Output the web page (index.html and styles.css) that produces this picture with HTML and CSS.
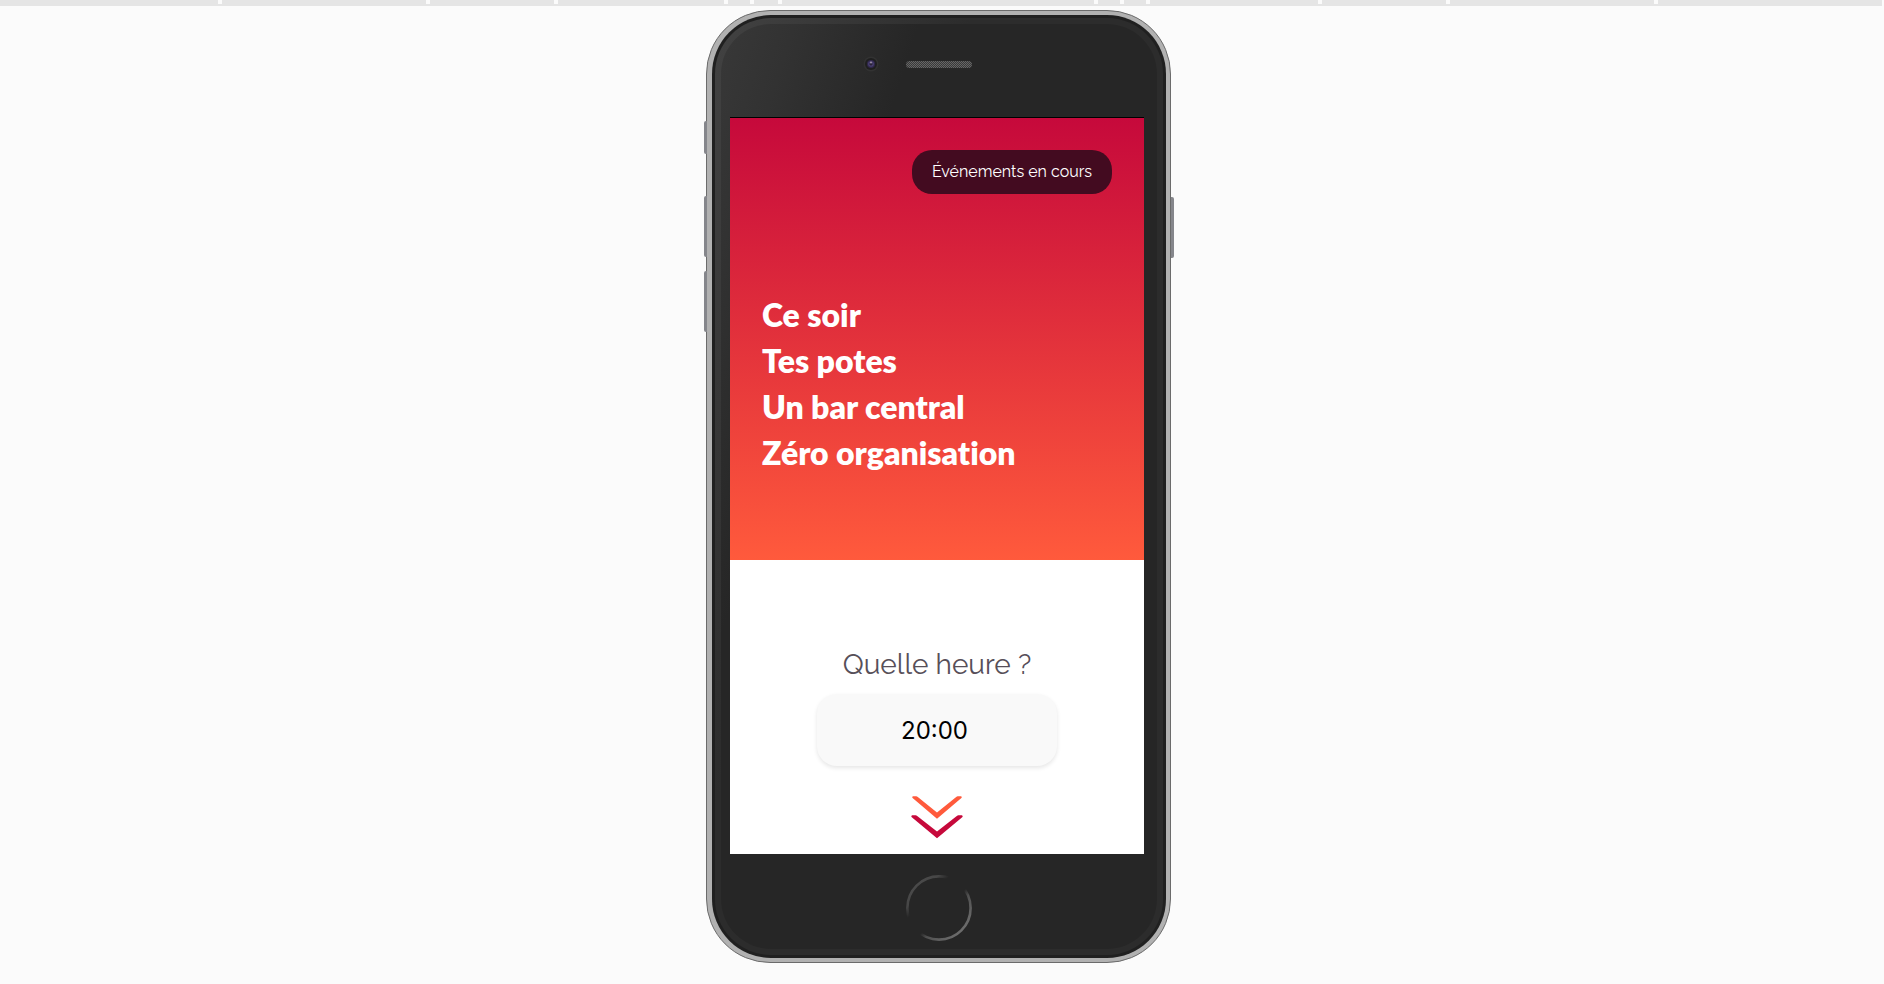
FILE: index.html
```
<!DOCTYPE html>
<html lang="fr">
<head>
<meta charset="utf-8">
<title>Ce soir, tes potes</title>
<link rel="stylesheet" href="styles.css">
</head>
<body>
<div class="ruler" aria-hidden="true">
  <i class="w218"></i><i class="w204"></i><i class="w124"></i><i class="w166"></i><i class="w22"></i><i class="w24"></i><i class="w312"></i><i class="w22"></i><i class="w22"></i><i class="w168"></i><i class="w124"></i><i class="w204"></i><i class="w224"></i>
</div>
<main class="stage">
  <div class="phone">
    <span class="key key-mute"></span>
    <span class="key key-up"></span>
    <span class="key key-down"></span>
    <span class="key key-power"></span>
    <div class="shell">
      <div class="bezel">
        <div class="face">
          <div class="head">
            <svg class="camera" viewBox="0 0 16 16" aria-hidden="true">
              <circle cx="8" cy="8" r="7.5" fill="#323232"/>
              <circle cx="8" cy="8" r="6" fill="#1f1f1f"/>
              <circle cx="8" cy="8" r="4" fill="#30284b"/>
              <circle cx="8" cy="8" r="2.8" fill="#4b4175"/>
              <circle cx="8" cy="8" r="1.6" fill="#292238"/>
              <circle cx="8" cy="6.6" r="1" fill="#9c8fa8"/>
            </svg>
            <span class="speaker"></span>
          </div>
          <div class="screen">
            <section class="hero">
              <button class="pill" type="button">Événements en cours</button>
              <h1 class="title">Ce soir<br>Tes potes<br>Un bar central<br>Zéro organisation</h1>
            </section>
            <section class="plan">
              <label class="question" for="hour">Quelle heure ?</label>
              <input class="hour" id="hour" type="text" value="20:00">
              <button class="next" type="button" aria-label="Continuer">
                <svg class="chevrons" viewBox="0 0 52 43" aria-hidden="true">
                  <path fill="#ff5a3c" d="M2 .3H5.2Q6 .3 6.8 1L26 16.4 45.200 1Q46 .3 46.800 .3H50Q51.600 .8 50.400 2L26 22.800 1.600 2Q.4 .8 2 .3Z"/>
                  <path fill="#c6093b" d="M1.200 19.300H4.600Q5.400 19.300 6.200 20L26 35.600 45.800 20Q46.600 19.300 47.400 19.300H50.800Q52.400 19.900 51.200 21.200L26 42.300 .8 21.200Q-.4 19.900 1.200 19.300Z"/>
                </svg>
              </button>
            </section>
          </div>
          <div class="foot">
            <svg class="home" viewBox="0 0 66 66" aria-hidden="true">
              <defs>
                <linearGradient id="ring" gradientUnits="userSpaceOnUse" x1="10" y1="10" x2="56" y2="56">
                  <stop offset="0" stop-color="#4a4a4a"/>
                  <stop offset=".14" stop-color="#464646"/>
                  <stop offset=".27" stop-color="#262626"/>
                  <stop offset=".58" stop-color="#262626"/>
                  <stop offset=".68" stop-color="#505050"/>
                  <stop offset="1" stop-color="#6c6c6c"/>
                </linearGradient>
              </defs>
              <circle cx="33" cy="33" r="31.600" fill="none" stroke="url(#ring)" stroke-width="2.600"/>
            </svg>
          </div>
        </div>
      </div>
    </div>
  </div>
</main>
</body>
</html>
```
FILE: styles.css
```
* { box-sizing: border-box; }

body {
  margin: 0;
  min-height: 100vh;
  background: #fbfbfb;
  font-family: Raleway, Lato, sans-serif;
}

.ruler {
  display: flex;
  gap: 4px;
  margin-right: 2px;
  border-bottom: 2px solid #e5e5e5;
}
.ruler i { height: 4px; flex-basis: 0; background: #e5e5e5; }
.w22 { flex-grow: 22; }
.w24 { flex-grow: 24; }
.w124 { flex-grow: 124; }
.w166 { flex-grow: 166; }
.w168 { flex-grow: 168; }
.w204 { flex-grow: 204; }
.w218 { flex-grow: 218; }
.w224 { flex-grow: 224; }
.w312 { flex-grow: 312; }

.stage {
  display: flex;
  justify-content: center;
  padding: 4px 7px 20px 0;
}

.phone {
  position: relative;
  max-width: 100%;
  padding: 4px 4px 4px 5px;
  border: 1px solid #6b6b6b;
  border-radius: 64px;
  background: #b1b1b1;
}
.shell {
  padding: 3px;
  border-radius: 59px;
  background: #202020;
}
.bezel {
  padding: 6px;
  border-radius: 56px;
  background: linear-gradient(108deg, #424242 0, #3d3d3d 8%, #2c2c2c 34%, #2c2c2c 100%);
}
.face {
  padding: 0 13px 0 9px;
  border-radius: 50px;
  background: linear-gradient(108deg, #383838 0, #323232 10%, #262626 27%, #262626 100%);
}

.key {
  position: absolute;
  left: -3px;
  width: 3px;
  height: 61px;
  border-radius: 2px 0 0 2px;
  background: #85868b;
}
.key-mute { top: 110px; height: 33px; }
.key-up { top: 185px; }
.key-down { top: 260px; }
.key-power {
  top: 186px;
  right: -4px;
  left: auto;
  border-radius: 0 2px 2px 0;
}

.head {
  display: flex;
  align-items: center;
  justify-content: center;
  gap: 27px;
  height: 93px;
  padding: 0 40px 13px 0;
}
.camera { width: 16px; height: 16px; }
.speaker {
  width: 66px;
  height: 7px;
  border-radius: 4px;
  background: repeating-conic-gradient(#666666 0 25%, #393939 0 50%) 0 0 / 2px 2px;
}

.screen {
  width: 414px;
  max-width: 100%;
  border-top: 1px solid #000000;
  background: #ffffff;
}
.hero {
  display: flex;
  flex-direction: column;
  gap: 98px;
  padding: 32px 32px 84px;
  background: linear-gradient(#c6093b, #ff5a3c);
}
.pill {
  align-self: flex-end;
  width: 200px;
  height: 44px;
  padding: 0;
  border: 0;
  border-radius: 20px;
  background: #430b20;
  color: #ffffff;
  font: 400 16px/20px Raleway, Lato, sans-serif;
}
.title {
  margin: 0;
  color: #ffffff;
  font: 800 32px/46px Lato, sans-serif;
  font-variant-ligatures: none;
}

.plan {
  display: flex;
  flex-direction: column;
  align-items: center;
  padding: 87px 32px 15px;
}
.question {
  margin-bottom: 11px;
  color: #574f59;
  font-size: 28px;
  line-height: 36px;
}
.hour {
  width: 240px;
  height: 72px;
  padding: 0 5px 0 0;
  border: 0;
  border-radius: 20px;
  background: #f9f9f9;
  box-shadow: 0 2px 4px rgba(0, 0, 0, 0.1);
  color: #000000;
  font: 400 24px/28px Inter, sans-serif;
  text-align: center;
}
.next {
  display: flex;
  margin-top: 30px;
  padding: 0;
  border: 0;
  background: none;
}
.chevrons { width: 52px; height: 43px; }

.foot {
  display: flex;
  justify-content: center;
  padding: 21px 0 8px 4px;
}
.home { width: 66px; height: 66px; }
```
